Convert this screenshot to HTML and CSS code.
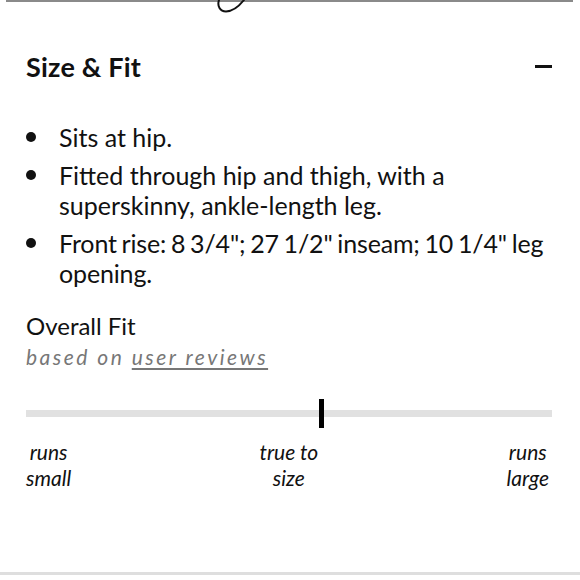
FILE: index.html
```html
<!DOCTYPE html>
<html>
<head>
<meta charset="utf-8">
<link rel="stylesheet" href="styles.css">
</head>
<body>
<div class="top-edge">
  <svg class="flourish" width="40" height="14" viewBox="0 0 40 14"><path d="M7 0 C5 6 8 11.5 14 11.5 C21 11.5 28 5 32 0" fill="none" stroke="#111" stroke-width="2" stroke-linecap="round"/></svg>
</div>
<main class="panel">
  <header class="panel-head">
    <h2 class="panel-title">Size &amp; Fit</h2>
    <span class="collapse" aria-label="collapse"></span>
  </header>
  <ul class="details">
    <li>Sits at hip.</li>
    <li>Fitted through hip and thigh, with a superskinny, ankle-length leg.</li>
    <li class="tight">Front rise: 8 3/4"; 27 1/2" inseam; 10 1/4" leg opening.</li>
  </ul>
  <section class="fit">
    <h3 class="fit-title">Overall Fit</h3>
    <p class="fit-sub">based on <a href="#">user reviews</a></p>
    <div class="scale">
      <div class="track"></div>
      <div class="marker"></div>
    </div>
    <div class="labels">
      <span>runs<br>small</span>
      <span>true to<br>size</span>
      <span class="right">runs<br>large</span>
    </div>
  </section>
</main>
<div class="bottom-edge"></div>
</body>
</html>
```
FILE: styles.css
```css
html, body {
  margin: 0;
  padding: 0;
  background: #fff;
}
body {
  width: 580px;
  height: 580px;
  position: relative;
  overflow: hidden;
  font-family: Lato, "Noto Sans", sans-serif;
  color: #111;
  display: flex;
  flex-direction: column;
}
.top-edge {
  position: relative;
  height: 2px;
  margin: 0 7px 0 6px;
  background: #8a8a8a;
}
.flourish {
  position: absolute;
  left: 206px;
  top: 0;
}
.panel {
  flex: 1;
  padding: 0 28px 0 26px;
}
.panel-head {
  display: flex;
  justify-content: space-between;
  align-items: center;
  margin-top: 45px;
  height: 38px;
}
.panel-title {
  margin: 0;
  font-size: 27px;
  font-weight: 700;
  letter-spacing: 0.2px;
}
.collapse {
  width: 17px;
  height: 3px;
  background: #111;
}
.details {
  list-style: none;
  margin: 37px 0 0;
  padding: 0;
  font-size: 25px;
  line-height: 30px;
}
.details li {
  position: relative;
  padding-left: 33px;
  margin-bottom: 8px;
}
.details li.tight {
  letter-spacing: -0.15px;
  word-spacing: -1.5px;
}
.details li::before {
  content: "";
  position: absolute;
  left: 0;
  top: 10px;
  width: 10px;
  height: 10px;
  border-radius: 50%;
  background: #111;
}
.fit-title {
  margin: 23px 0 0;
  font-size: 24px;
  font-weight: 400;
  line-height: 30px;
}
.fit-sub {
  margin: 3px 0 0;
  font-size: 21px;
  font-style: italic;
  letter-spacing: 2.5px;
  color: #777;
  line-height: 26px;
}
.fit-sub a {
  color: #777;
  text-decoration: underline;
  text-underline-offset: 3px;
}
.scale {
  position: relative;
  margin-top: 29px;
  height: 29px;
  display: flex;
  align-items: center;
}
.track {
  width: 100%;
  height: 7px;
  background: #e1e1e1;
}
.marker {
  position: absolute;
  left: 293px;
  top: 0;
  width: 5px;
  height: 29px;
  background: #000;
}
.labels {
  display: flex;
  justify-content: space-between;
  margin-top: 11px;
  font-size: 21px;
  font-style: italic;
  line-height: 25.5px;
  text-align: center;
  color: #111;
}
.labels .right {
  margin-right: 3px;
}
.bottom-edge {
  height: 3px;
  margin-bottom: 5px;
  background: #dedede;
}
```
